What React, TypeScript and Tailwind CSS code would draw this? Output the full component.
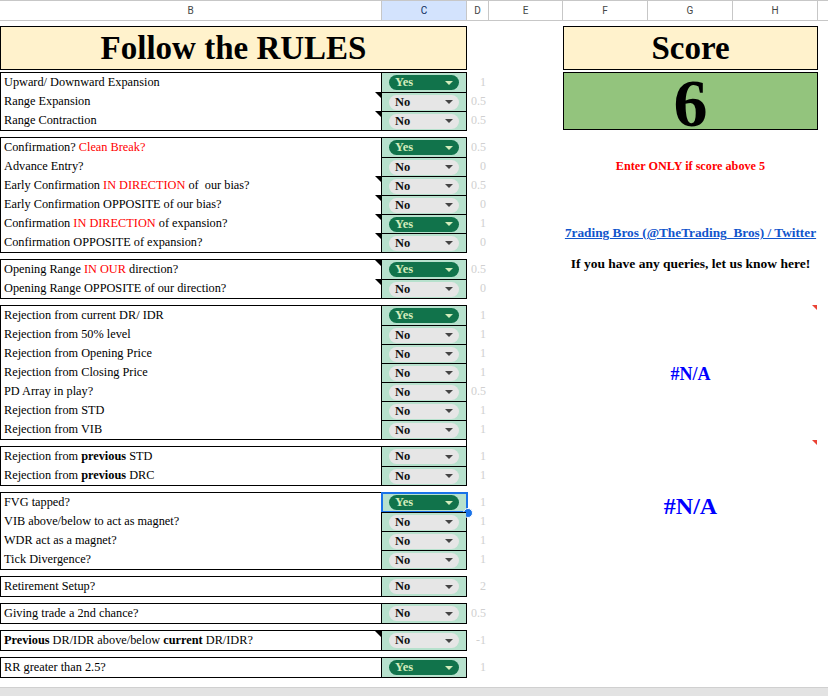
import React from 'react';

type Seg = string | { t: string; red?: boolean; bold?: boolean };

interface Rule {
  label: Seg[];
  value: 'Yes' | 'No';
  points: string;
  note?: boolean;
  selected?: boolean;
}

const groups: Rule[][] = [
  [
    { label: ['Upward/ Downward Expansion'], value: 'Yes', points: '1' },
    { label: ['Range Expansion'], value: 'No', points: '0.5', note: true },
    { label: ['Range Contraction'], value: 'No', points: '0.5', note: true },
  ],
  [
    { label: ['Confirmation? ', { t: 'Clean Break?', red: true }], value: 'Yes', points: '0.5' },
    { label: ['Advance Entry?'], value: 'No', points: '0' },
    { label: ['Early Confirmation ', { t: 'IN DIRECTION', red: true }, ' of  our bias?'], value: 'No', points: '0.5', note: true },
    { label: ['Early Confirmation OPPOSITE of our bias?'], value: 'No', points: '0', note: true },
    { label: ['Confirmation ', { t: 'IN DIRECTION', red: true }, ' of expansion?'], value: 'Yes', points: '1', note: true },
    { label: ['Confirmation OPPOSITE of expansion?'], value: 'No', points: '0', note: true },
  ],
  [
    { label: ['Opening Range ', { t: 'IN OUR', red: true }, ' direction?'], value: 'Yes', points: '0.5', note: true },
    { label: ['Opening Range OPPOSITE of our direction?'], value: 'No', points: '0', note: true },
  ],
  [
    { label: ['Rejection from current DR/ IDR'], value: 'Yes', points: '1' },
    { label: ['Rejection from 50% level'], value: 'No', points: '1' },
    { label: ['Rejection from Opening Price'], value: 'No', points: '1' },
    { label: ['Rejection from Closing Price'], value: 'No', points: '1' },
    { label: ['PD Array in play?'], value: 'No', points: '0.5' },
    { label: ['Rejection from STD'], value: 'No', points: '1' },
    { label: ['Rejection from VIB'], value: 'No', points: '1' },
  ],
  [
    { label: ['Rejection from ', { t: 'previous', bold: true }, ' STD'], value: 'No', points: '1' },
    { label: ['Rejection from ', { t: 'previous', bold: true }, ' DRC'], value: 'No', points: '1' },
  ],
  [
    { label: ['FVG tapped?'], value: 'Yes', points: '1', selected: true },
    { label: ['VIB above/below to act as magnet?'], value: 'No', points: '1' },
    { label: ['WDR act as a magnet?'], value: 'No', points: '1' },
    { label: ['Tick Divergence?'], value: 'No', points: '1' },
  ],
  [{ label: ['Retirement Setup?'], value: 'No', points: '2' }],
  [{ label: ['Giving trade a 2nd chance?'], value: 'No', points: '0.5' }],
  [
    {
      label: [{ t: 'Previous', bold: true }, ' DR/IDR above/below ', { t: 'current', bold: true }, ' DR/IDR?'],
      value: 'No',
      points: '-1',
      note: true,
    },
  ],
  [{ label: ['RR greater than 2.5?'], value: 'Yes', points: '1' }],
];

const columns = [
  { name: 'B', w: 'w-[382px]' },
  { name: 'C', w: 'w-[85px]', active: true },
  { name: 'D', w: 'w-[22px]' },
  { name: 'E', w: 'w-[74px]' },
  { name: 'F', w: 'w-[85px]' },
  { name: 'G', w: 'w-[85px]' },
  { name: 'H', w: 'w-[85px]' },
];

const Chip = ({ value }: { value: 'Yes' | 'No' }) => {
  const yes = value === 'Yes';
  return (
    <div
      className={`flex h-[15px] w-full items-center justify-between rounded-full pl-[6px] pr-[6px] ${
        yes ? 'bg-[#11734b] text-[#d4edbc]' : 'bg-[#e6e6e6] text-[#111]'
      }`}
    >
      <span className="text-[12.5px] font-bold leading-none">{value}</span>
      <span
        className={`h-0 w-0 border-l-[4px] border-r-[4px] border-t-[4px] border-l-transparent border-r-transparent ${
          yes ? 'border-t-[#d4edbc]' : 'border-t-[#444]'
        }`}
      />
    </div>
  );
};

const RuleGroup = ({ rules }: { rules: Rule[] }) => (
  <div className="flex">
    <div className="w-[467px] border border-black">
      {rules.map((r, i) => (
        <div key={i} className="flex h-[19px]">
          <div className="relative flex-1 whitespace-pre pl-[3px] text-[12.3px] leading-[19px] text-black">
            {r.label.map((s, j) =>
              typeof s === 'string' ? (
                <span key={j}>{s}</span>
              ) : (
                <span key={j} className={`${s.red ? 'text-[#ff0000]' : ''} ${s.bold ? 'font-bold' : ''}`}>
                  {s.t}
                </span>
              )
            )}
            {r.note && (
              <span className="absolute right-0 top-0 h-0 w-0 border-l-[6px] border-t-[6px] border-l-transparent border-t-black" />
            )}
          </div>
          <div
            className={`relative flex w-[85px] items-center border-l border-black bg-[#b7e1cd] px-[7px] ${
              i > 0 ? 'border-t' : ''
            }`}
          >
            <Chip value={r.value} />
            {r.selected && (
              <>
                <span className="absolute -left-px -top-px bottom-[-1px] right-[-2px] border-2 border-[#1a73e8]" />
                <span className="absolute bottom-[-6px] right-[-7px] h-[10px] w-[10px] rounded-full border border-white bg-[#1a73e8]" />
              </>
            )}
          </div>
        </div>
      ))}
    </div>
    <div className="w-[22px] pt-px">
      {rules.map((r, i) => (
        <div key={i} className="h-[19px] pr-[3px] text-right text-[12px] leading-[19px] text-[#d0d0d0]">
          {r.points}
        </div>
      ))}
    </div>
  </div>
);

export default function App() {
  return (
    <div className="relative h-[696px] w-[828px] overflow-hidden bg-white font-['Liberation_Serif',serif]">
      {/* column headers */}
      <div className="flex h-[21px] border-b border-t border-[#c7c7c7] font-['Roboto',sans-serif] text-[10px] text-[#444746]">
        {columns.map((c) => (
          <div
            key={c.name}
            className={`flex shrink-0 items-center justify-center border-r border-[#c7c7c7] ${c.w} ${
              c.active ? 'bg-[#d3e3fd] text-[#0b2b5c]' : ''
            }`}
          >
            {c.name}
          </div>
        ))}
        <div className="flex-1" />
      </div>

      <div className="flex pt-[5px]">
        {/* rules column */}
        <div className="flex w-[489px] flex-col">
          <div className="flex h-[44px] w-[467px] items-center justify-center border border-black bg-[#fff2cc] pt-px text-[33px] font-bold text-black">
            Follow the RULES
          </div>
          <div className="mt-[2px] flex flex-col gap-[6px]">
            {groups.slice(0, 4).map((g, i) => (
              <RuleGroup key={i} rules={g} />
            ))}
          </div>
          <div className="h-[6px] w-[467px] border-r border-black" />
          <div className="flex flex-col gap-[6px]">
            {groups.slice(4).map((g, i) => (
              <RuleGroup key={i} rules={g} />
            ))}
          </div>
        </div>

        <div className="w-[74px]" />

        {/* score column */}
        <div className="relative flex w-[255px] flex-col">
          <div className="flex h-[44px] items-center justify-center border border-black bg-[#fff2cc] pt-px text-[33px] font-bold text-black">
            Score
          </div>
          <div className="mt-[2px] flex h-[58px] items-center justify-center border border-black bg-[#93c47d] pt-[4px] text-[68px] font-bold leading-none text-black">
            6
          </div>
          <div className="mt-[27px] h-[19px] text-center text-[12.2px] font-bold leading-[19px] text-[#ff0000]">
            Enter ONLY if score above 5
          </div>
          <div className="mt-[47px] h-[19px] whitespace-nowrap text-center text-[13.3px] font-bold leading-[19px] text-[#1155cc] underline">
            7rading Bros (@TheTrading_Bros) / Twitter
          </div>
          <div className="mt-[12px] h-[19px] whitespace-nowrap text-center text-[13.5px] font-bold leading-[19px] text-black">
            If you have any queries, let us know here!
          </div>
          <div className="mt-[92px] h-[19px] text-center text-[18px] font-bold leading-[19px] text-[#0000ff]">
            #N/A
          </div>
          <div className="mt-[107px] h-[30px] text-center text-[24px] font-bold leading-[30px] text-[#0000ff]">
            #N/A
          </div>
          <span className="absolute right-[1px] top-[279px] h-0 w-0 border-l-[5px] border-t-[5px] border-l-transparent border-t-[#ea4335]" />
          <span className="absolute right-[1px] top-[414px] h-0 w-0 border-l-[5px] border-t-[5px] border-l-transparent border-t-[#ea4335]" />
        </div>
      </div>

      {/* bottom scroll strip */}
      <div className="absolute bottom-0 left-0 right-0 h-[9px] border-t border-[#d0d0d0] bg-[#e3e3e3]" />
    </div>
  );
}
